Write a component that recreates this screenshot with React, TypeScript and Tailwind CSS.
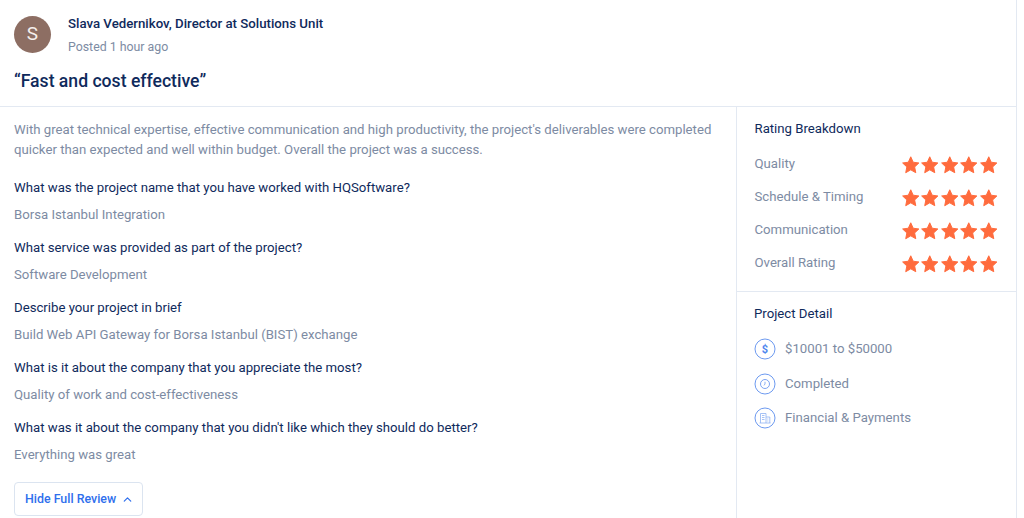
import { ChevronUp } from 'lucide-react';

const qa = [
  { q: 'What was the project name that you have worked with HQSoftware?', a: 'Borsa Istanbul Integration' },
  { q: 'What service was provided as part of the project?', a: 'Software Development' },
  { q: 'Describe your project in brief', a: 'Build Web API Gateway for Borsa Istanbul (BIST) exchange' },
  { q: 'What is it about the company that you appreciate the most?', a: 'Quality of work and cost-effectiveness' },
  { q: "What was it about the company that you didn't like which they should do better?", a: 'Everything was great' },
];

const ratings = ['Quality', 'Schedule & Timing', 'Communication', 'Overall Rating'];

const Star = () => (
  <svg viewBox="0 0 24 24" className="w-[19.5px] h-[19.5px] shrink-0 fill-[#ff6b3d] stroke-[#ff6b3d]">
    <path d="M12 2.2l3 6.7 7 .9-5.2 4.9 1.4 7.1L12 18.3l-6.2 3.5 1.4-7.1L2 9.8l7-.9z" strokeWidth="1.2" strokeLinejoin="round" />
  </svg>
);

const DollarIcon = () => (
  <svg viewBox="0 0 22 22" className="w-[22px] h-[22px]" fill="none">
    <circle cx="11" cy="11" r="10" stroke="#6d9af0" strokeWidth="1" />
    <text x="11" y="15" textAnchor="middle" fontSize="11" fontWeight="700" fill="#4f86ee" fontFamily="Roboto, sans-serif">$</text>
  </svg>
);

const ClockIcon = () => (
  <svg viewBox="0 0 22 22" className="w-[22px] h-[22px]" fill="none" stroke="#6d9af0">
    <circle cx="11" cy="11" r="10" strokeWidth="1" />
    <circle cx="11" cy="11" r="4.5" strokeWidth="0.9" />
    <path d="M11 8.8V11l-1 1.4" strokeWidth="0.8" />
  </svg>
);

const BuildingIcon = () => (
  <svg viewBox="0 0 22 22" className="w-[22px] h-[22px]" fill="none" stroke="#6d9af0">
    <circle cx="11" cy="11" r="10" strokeWidth="1" />
    <path d="M6.5 16V6.5h5.5V16M12 10h3.8v6M5.5 16h11" strokeWidth="0.8" stroke="#8fb2f3" />
    <path d="M8 8.5h2.5M8 10.5h2.5M8 12.5h2.5M13.3 12h1M13.3 14h1" strokeWidth="0.8" stroke="#8fb2f3" />
  </svg>
);

const details = [
  { icon: DollarIcon, label: '$10001 to $50000' },
  { icon: ClockIcon, label: 'Completed' },
  { icon: BuildingIcon, label: 'Financial & Payments' },
];

export default function App() {
  return (
    <div className="w-[1024px] h-[518px] overflow-hidden bg-white font-['Roboto',sans-serif]">
      <div className="w-[1017px] h-[518px] border-r border-[#e3e9f2] flex flex-col">
        {/* Header */}
        <div className="h-[107px] shrink-0 border-b border-[#e3e9f2] pl-[14px]">
          <div className="flex pt-[16px]">
            <div className="w-[37px] h-[37px] rounded-full bg-[#8d6e63] text-[#f5efec] text-[19px] flex items-center justify-center">
              S
            </div>
            <div className="ml-[17px]">
              <p className="text-[13.25px] leading-[16px] font-medium text-[#0f2a5c]">
                Slava Vedernikov, Director at Solutions Unit
              </p>
              <p className="text-[12.35px] leading-[16px] mt-[7px] text-[#7d8ba3]">Posted 1 hour ago</p>
            </div>
          </div>
          <h2 className="text-[17.6px] leading-[24px] font-medium text-[#0f2a5c] mt-[14px]">“Fast and cost effective”</h2>
        </div>

        <div className="flex flex-1 min-h-0">
          {/* Review */}
          <div className="w-[737px] shrink-0 border-r border-[#e3e9f2] pl-[14px] pt-[13px]">
            <p className="text-[13.2px] leading-[20px] text-[#7d8ba3] w-[710px]">
              With great technical expertise, effective communication and high productivity, the project's deliverables
              were completed quicker than expected and well within budget. Overall the project was a success.
            </p>
            <div className="mt-[18px] flex flex-col gap-[13px]">
              {qa.map((item, index) => (
                <div key={index}>
                  <p className="text-[13.2px] leading-[20px] text-[#0f2a5c]">{item.q}</p>
                  <p className="text-[13.2px] leading-[20px] mt-[7px] text-[#7d8ba3]">{item.a}</p>
                </div>
              ))}
            </div>
            <button className="mt-[17px] w-[129px] h-[34px] rounded-[4px] border border-[#dbe4f0] pl-[10px] flex items-center gap-[5px] text-[12.4px] font-medium text-[#2f6fed]">
              Hide Full Review
              <ChevronUp className="w-[13px] h-[13px]" strokeWidth={2.25} />
            </button>
          </div>

          {/* Sidebar */}
          <div className="flex-1 flex flex-col">
            <div className="h-[185px] shrink-0 border-b border-[#e3e9f2] pl-[17.5px] pr-[18px] pt-[13px]">
              <h3 className="text-[13.2px] leading-[17px] text-[#0f2a5c]">Rating Breakdown</h3>
              <div className="mt-[17px] flex flex-col gap-[13px]">
                {ratings.map((label) => (
                  <div key={label} className="flex items-center justify-between h-[20px]">
                    <span className="text-[13.2px] text-[#7d8ba3]">{label}</span>
                    <div className="flex mt-[2px]">
                      {[0, 1, 2, 3, 4].map((i) => (
                        <Star key={i} />
                      ))}
                    </div>
                  </div>
                ))}
              </div>
            </div>
            <div className="pl-[17px] pr-[18px] pt-[13px]">
              <h3 className="text-[13.2px] leading-[17px] text-[#0f2a5c]">Project Detail</h3>
              <div className="mt-[16px] flex flex-col gap-[12.5px]">
                {details.map((d) => (
                  <div key={d.label} className="flex items-center gap-[9px] h-[22px]">
                    <d.icon />
                    <span className="text-[13.2px] text-[#7d8ba3]">{d.label}</span>
                  </div>
                ))}
              </div>
            </div>
          </div>
        </div>
      </div>
    </div>
  );
}
